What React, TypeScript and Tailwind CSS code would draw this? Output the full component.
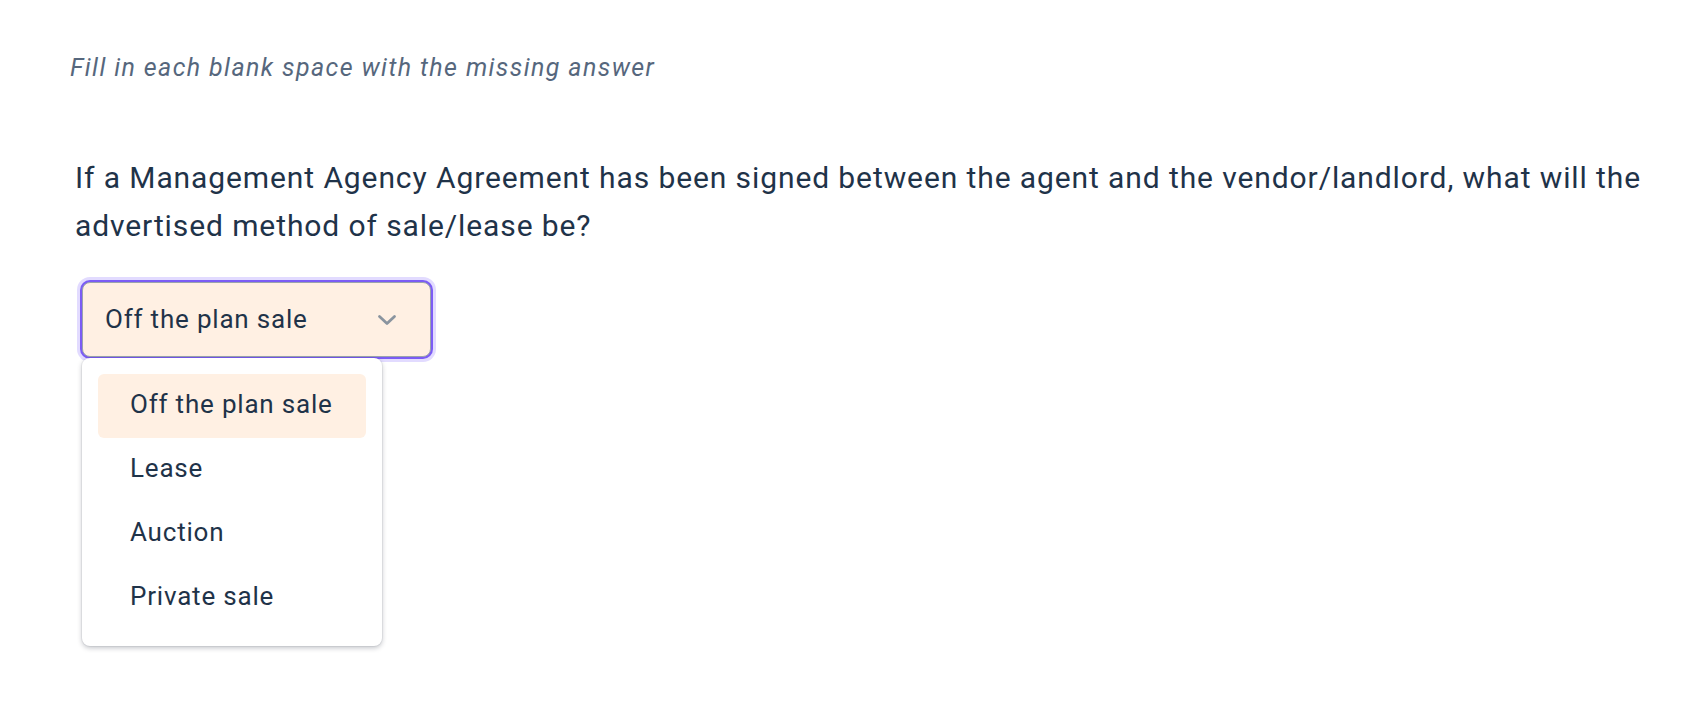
import { useState } from 'react'

const options = ['Off the plan sale', 'Lease', 'Auction', 'Private sale']

export default function App() {
  const [selected] = useState(options[0])

  return (
    <div className="min-h-screen bg-white" style={{ fontFamily: 'Roboto, "Noto Sans", sans-serif' }}>
      <div className="pt-[52px] pl-[70px] pr-8">
        {/* Instruction */}
        <p className="text-[25px] leading-[32px] italic tracking-[1.4px] text-[#56677d]">
          Fill in each blank space with the missing answer
        </p>

        {/* Question */}
        <div className="mt-[70px] pl-[5px]">
          <p className="text-[30px] leading-[48px] tracking-[0.9px] text-[#1f3349] max-w-[1610px]">
            If a Management Agency Agreement has been signed between the agent and the vendor/landlord, what will the
            advertised method of sale/lease be?
          </p>

          {/* Select */}
          <div className="relative mt-[32px] ml-[7px] w-[349px]">
            <button
              type="button"
              className="flex h-[75px] w-full items-center justify-between rounded-[8px] border border-[#9aa3ad] bg-[#fff0e3] pl-[22px] pr-[33px] text-left shadow-[0_0_0_2px_#7b5cf5,0_0_0_5px_#e2dbff]"
            >
              <span className="text-[26px] tracking-[0.8px] text-[#1f3349]">{selected}</span>
              <svg width="20" height="12" viewBox="0 0 20 12" fill="none" className="text-[#8a949f]">
                <path d="M2.5 2.5l7.5 7 7.5-7" stroke="currentColor" strokeWidth="2.8" strokeLinecap="round" strokeLinejoin="round" />
              </svg>
            </button>

            {/* Menu */}
            <div className="absolute left-0 top-[76px] z-10 w-[300px] rounded-[8px] bg-white p-4 shadow-[0_2px_5px_rgba(15,23,42,0.25),0_0_0_1px_rgba(15,23,42,0.05)]">
              {options.map((opt) => (
                <div
                  key={opt}
                  className={
                    'flex h-16 items-center rounded-[6px] px-8 pb-[3px] text-[26px] tracking-[0.8px] text-[#1f3349] ' +
                    (opt === selected ? 'bg-[#fff0e3]' : '')
                  }
                >
                  {opt}
                </div>
              ))}
            </div>
          </div>
        </div>
      </div>
    </div>
  )
}
